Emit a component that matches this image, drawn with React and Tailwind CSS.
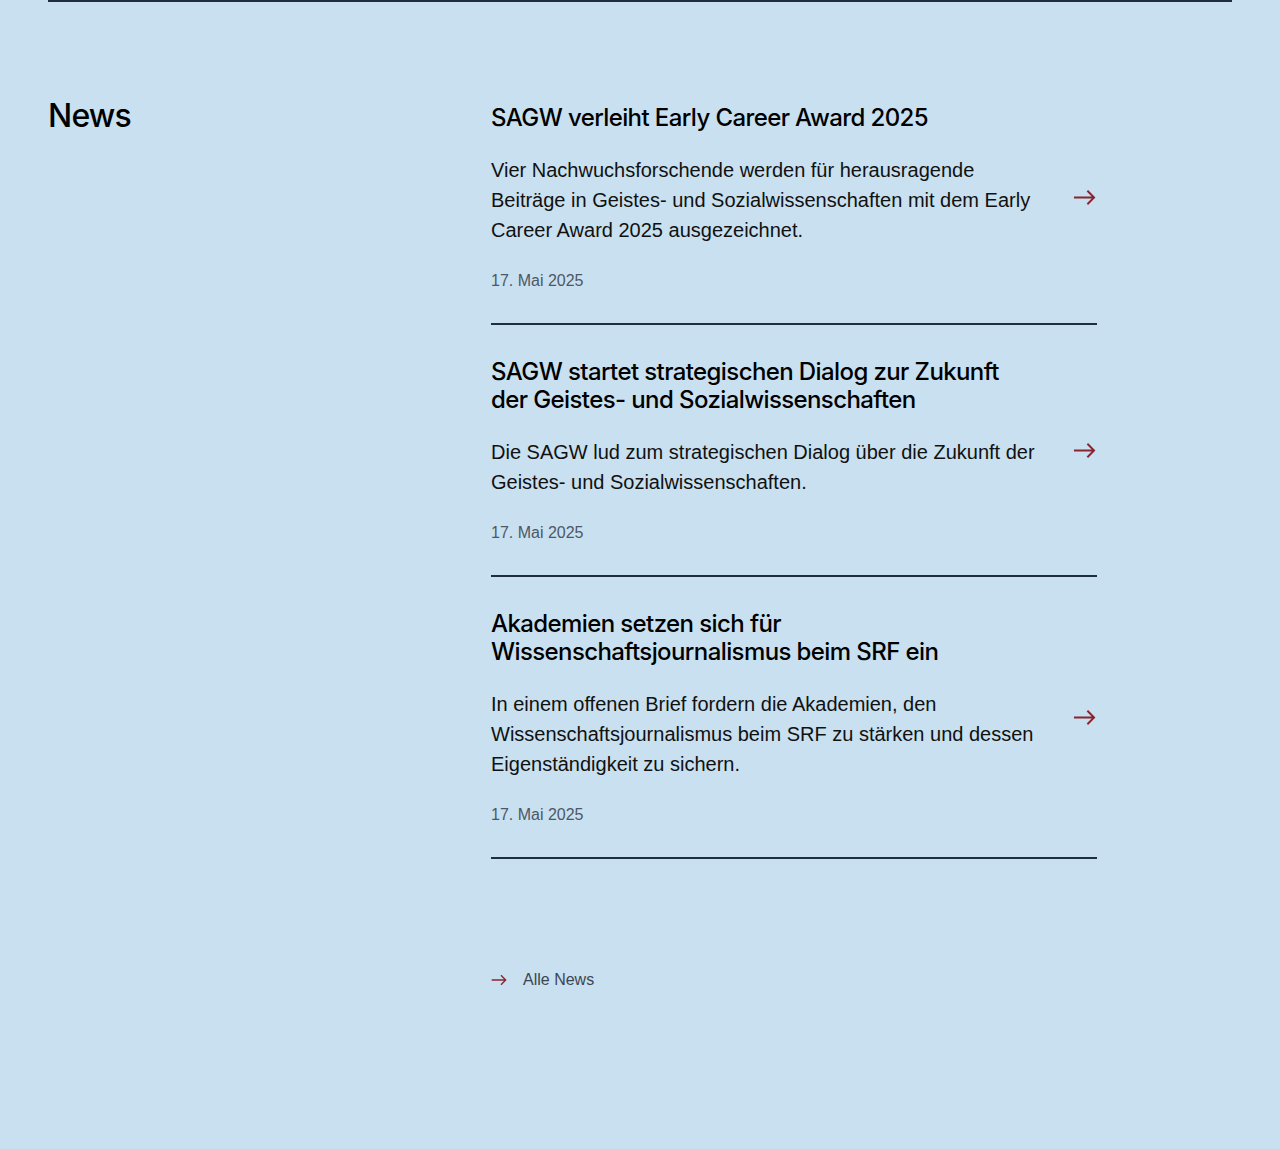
import React from 'react';

const items = [
  {
    title: 'SAGW verleiht Early Career Award 2025',
    text: 'Vier Nachwuchsforschende werden für herausragende Beiträge in Geistes- und Sozialwissenschaften mit dem Early Career Award 2025 ausgezeichnet.',
    date: '17. Mai 2025',
  },
  {
    title: 'SAGW startet strategischen Dialog zur Zukunft der Geistes- und Sozialwissenschaften',
    text: 'Die SAGW lud zum strategischen Dialog über die Zukunft der Geistes- und Sozialwissenschaften.',
    date: '17. Mai 2025',
  },
  {
    title: 'Akademien setzen sich für Wissenschaftsjournalismus beim SRF ein',
    text: 'In einem offenen Brief fordern die Akademien, den Wissenschaftsjournalismus beim SRF zu stärken und dessen Eigenständigkeit zu sichern.',
    date: '17. Mai 2025',
  },
];

function Arrow({ className }) {
  return (
    <svg viewBox="0 0 24 24" fill="none" stroke="currentColor" strokeWidth="2" className={className}>
      <path d="M1 12h21M15 5l7 7-7 7" />
    </svg>
  );
}

export default function App() {
  return (
    <div className="min-h-[1149px] w-full bg-[#c8e0ef] font-['Liberation_Sans',Arial,sans-serif]">
      <div className="mx-12 border-t-2 border-[#1d2f3f]" />
      <section className="mx-12 grid grid-cols-[443px_606px] pt-[96px]">
        <h2 className="-mt-[2px] text-[32px] leading-[40px] font-medium tracking-[-0.025em] text-black font-['Inter',sans-serif]">
          News
        </h2>
        <div>
          {items.map((item, i) => (
            <a key={i} href="#" className={`block border-b-2 border-[#1d2f3f] pb-[32px] ${i === 0 ? 'pt-[6px]' : 'pt-[33px]'}`}>
              <div className="flex items-center justify-between">
                <div className="w-[550px]">
                  <h3 className="max-w-[540px] text-[24px] leading-[28px] font-medium tracking-[-0.025em] text-black font-['Inter',sans-serif]">
                    {item.title}
                  </h3>
                  <p className="mt-[23px] text-[20px] leading-[30px] text-[#111]">{item.text}</p>
                  <p className="mt-[26px] text-[16px] leading-[20px] text-[#4d5866]">{item.date}</p>
                </div>
                <Arrow className="w-[23px] h-[23px] text-[#8a2530] mr-[1px]" />
              </div>
            </a>
          ))}
          <a href="#" className="mt-[109px] flex items-center gap-[16px] text-[16px] text-[#3b4654]">
            <Arrow className="w-[16px] h-[16px] text-[#8a2530]" />
            Alle News
          </a>
        </div>
      </section>
    </div>
  );
}
